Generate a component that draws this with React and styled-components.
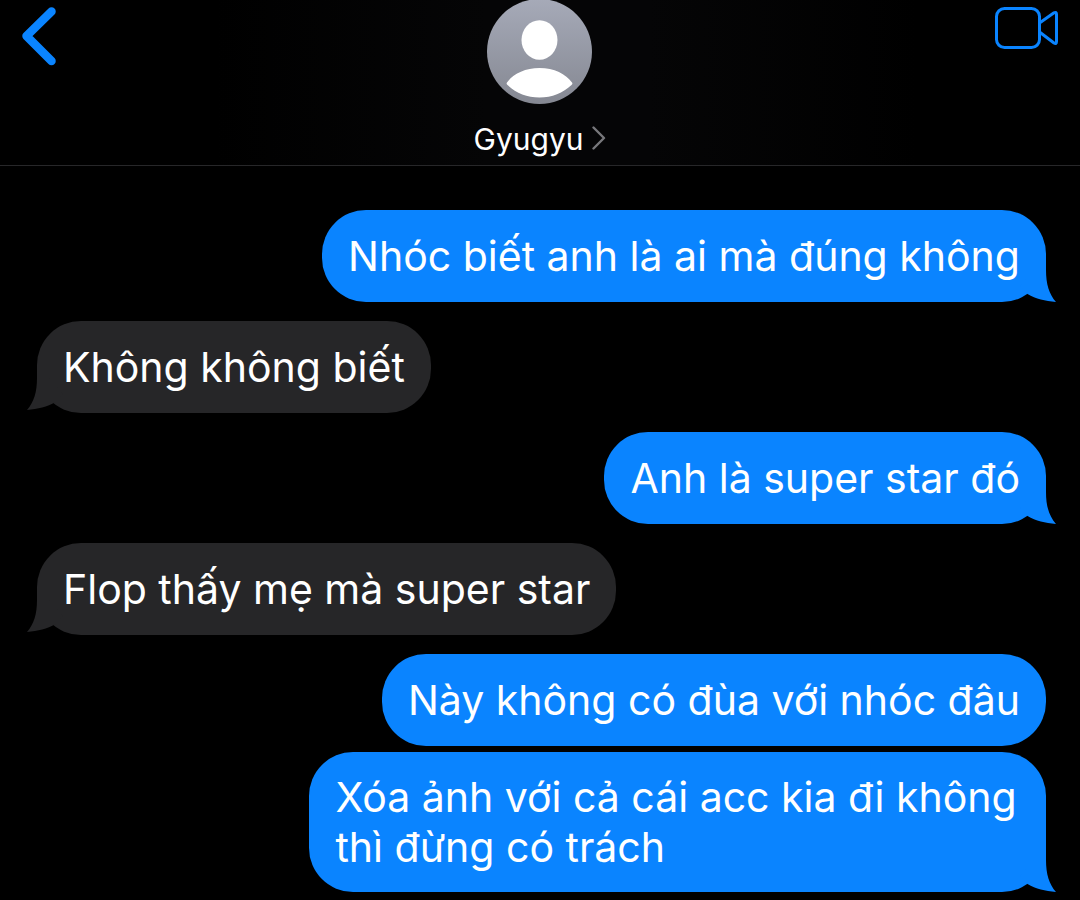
import React from "react";
import styled, { createGlobalStyle, css } from "styled-components";

const GlobalStyle = createGlobalStyle`
  *, *::before, *::after { box-sizing: border-box; }
  body {
    margin: 0;
    background: #000;
    color: #fff;
    font-family: Inter, "Liberation Sans", sans-serif;
  }
  svg { display: block; }
`;

const Page = styled.div`
  display: flex;
  flex-direction: column;
  min-height: 100vh;
  background: #000;
`;

const Header = styled.header`
  display: grid;
  grid-template-columns: 1fr auto 1fr;
  align-items: start;
  padding: 0 20px 6px;
  border-bottom: 1px solid #272729;
  background: linear-gradient(90deg, #000 20%, #050506 45%, #050506 60%, #000 85%);
`;

const IconButton = styled.button`
  justify-self: ${(p) => (p.$end ? "end" : "start")};
  padding: 6px 0 0;
  border: 0;
  background: none;
  color: #0a84ff;
  cursor: pointer;
`;

const Contact = styled.button`
  display: flex;
  flex-direction: column;
  align-items: center;
  gap: 15px;
  padding: 0;
  border: 0;
  background: none;
  color: #fff;
  font: inherit;
  cursor: pointer;
`;

const NameLine = styled.span`
  display: flex;
  align-items: center;
  gap: 9px;
  font-size: 30px;
  line-height: 40px;
`;

const Messages = styled.ol`
  display: flex;
  flex-direction: column;
  margin: 0;
  padding: 44px 34px 8px 37px;
  list-style: none;
`;

const Message = styled.li`
  display: flex;
  justify-content: ${(p) => (p.$mine ? "flex-end" : "flex-start")};

  &:not(:first-child) {
    margin-top: ${(p) => (p.$grouped ? "6px" : "19px")};
  }
`;

const Bubble = styled.div`
  position: relative;
  display: flex;
  align-items: center;
  max-width: 73%;
  min-height: 92px;
  padding: 20px 26px;
  border-radius: 44px;
  background: ${(p) => (p.$mine ? "#0a84ff" : "#262628")};
  color: #fff;
  font-size: 41px;
  line-height: 50px;
`;

const TailShape = styled.svg`
  position: absolute;
  ${(p) =>
    p.$mine
      ? css`
          right: -10px;
          bottom: 0;
          color: #0a84ff;
        `
      : css`
          left: -10px;
          bottom: 3px;
          color: #262628;
          transform: scaleX(-1);
        `}
`;

function Tail({ mine }) {
  return (
    <TailShape $mine={mine} width="40" height="46" viewBox="0 0 40 46" aria-hidden="true">
      <path
        d="M30 0V14C30 28 33 38 40 46C29 45 20 43 11.500 38L4 30Z"
        fill="currentColor"
      />
    </TailShape>
  );
}

function BackIcon() {
  return (
    <svg width="38" height="60" viewBox="0 0 38 60" fill="none" aria-hidden="true">
      <path
        d="M31.500 5.500L6.500 30L31.500 55"
        stroke="currentColor"
        strokeWidth="8.500"
        strokeLinecap="round"
        strokeLinejoin="round"
      />
    </svg>
  );
}

function VideoIcon() {
  return (
    <svg width="66" height="44" viewBox="0 0 66 44" fill="none" aria-hidden="true">
      <g stroke="currentColor" strokeWidth="3" strokeLinejoin="round">
        <rect x="2.500" y="2.500" width="43" height="39" rx="8" />
        <path d="M45.500 17L60 6.800Q62.500 5.500 62.500 8.500V35.500Q62.500 38.500 60 37L45.500 26" />
      </g>
    </svg>
  );
}

function Avatar() {
  return (
    <svg width="105" height="104" viewBox="0 1 105 104" aria-hidden="true">
      <defs>
        <linearGradient id="avatar-fill" x1="0" y1="0" x2="0" y2="1">
          <stop offset="0" stopColor="#a6aab8" />
          <stop offset="1" stopColor="#858892" />
        </linearGradient>
      </defs>
      <circle cx="52.500" cy="52.500" r="52.500" fill="url(#avatar-fill)" />
      <ellipse cx="52.500" cy="41" rx="18" ry="19.700" fill="#fff" />
      <path
        d="M20 83.500C26 75 38 69 52.500 69C67 69 79 75 85 83.500Q86 84.500 84.500 86C76 94 65 98.500 52.500 98.500C40 98.500 29 94 20.500 86Q19 84.500 20 83.500Z"
        fill="#fff"
      />
    </svg>
  );
}

function ChevronIcon() {
  return (
    <svg width="14" height="26" viewBox="0 0 14 26" fill="none" aria-hidden="true">
      <path
        d="M1.500 1.500L12 12L1.500 22.500"
        stroke="#77777b"
        strokeWidth="2.400"
        strokeLinecap="round"
        strokeLinejoin="round"
      />
    </svg>
  );
}

const conversation = [
  { text: "Nhóc biết anh là ai mà đúng không", mine: true, tail: true },
  { text: "Không không biết", mine: false, tail: true },
  { text: "Anh là super star đó", mine: true, tail: true },
  { text: "Flop thấy mẹ mà super star", mine: false, tail: true },
  { text: "Này không có đùa với nhóc đâu", mine: true, tail: false },
  { text: "Xóa ảnh với cả cái acc kia đi không thì đừng có trách", mine: true, tail: true, grouped: true },
];

export default function App() {
  return (
    <Page lang="vi">
      <GlobalStyle />
      <Header>
        <IconButton type="button" aria-label="Quay lại">
          <BackIcon />
        </IconButton>
        <Contact type="button">
          <Avatar />
          <NameLine>
            Gyugyu
            <ChevronIcon />
          </NameLine>
        </Contact>
        <IconButton type="button" aria-label="Gọi video" $end>
          <VideoIcon />
        </IconButton>
      </Header>
      <Messages>
        {conversation.map((message) => (
          <Message key={message.text} $mine={message.mine} $grouped={message.grouped}>
            <Bubble $mine={message.mine}>
              {message.tail && <Tail mine={message.mine} />}
              <span>{message.text}</span>
            </Bubble>
          </Message>
        ))}
      </Messages>
    </Page>
  );
}
